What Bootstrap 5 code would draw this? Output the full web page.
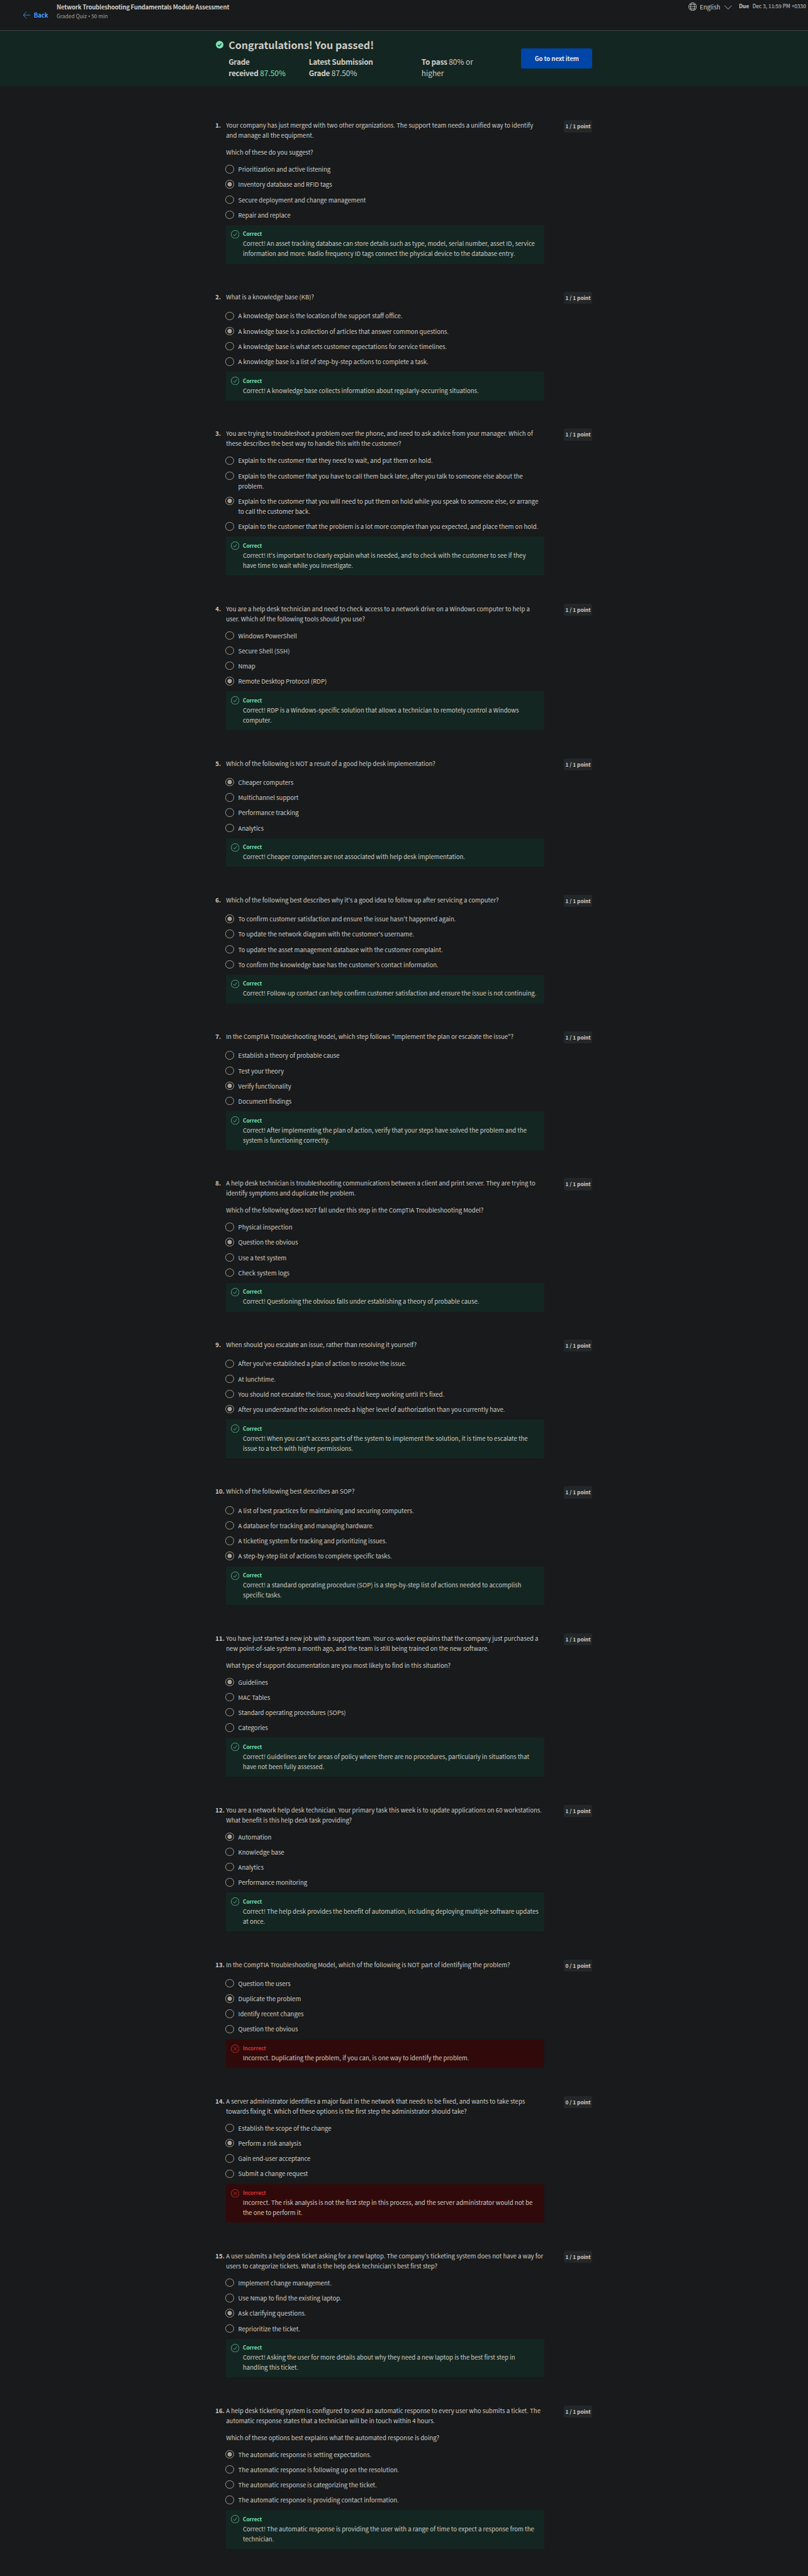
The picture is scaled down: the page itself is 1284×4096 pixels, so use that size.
<!DOCTYPE html>
<html lang="en">
<head>
<meta charset="utf-8">
<title>Network Troubleshooting Fundamentals Module Assessment</title>
<link href="https://cdn.jsdelivr.net/npm/bootstrap@5.3.0/dist/css/bootstrap.min.css" rel="stylesheet">
<style>
  html { font-size: 10.698px; }
  body {
    background: #181a1b; color: #d1cdc7; min-height: 4096px; overflow-x: hidden;
    font-family: "Noto Sans CJK SC", "Noto Sans", sans-serif;
    font-size: .896rem; line-height: 1.5rem; white-space: nowrap;
  }
  .quiz-top { height: 4.56rem; border-bottom: 1px solid #3e4446; padding: .26rem .29rem 0 3.32rem; }
  .back-link { color: #45a2ff; margin-top: 1.25rem; width: 5.1rem; }
  .back-link svg { width: 1.125rem; height: 1.125rem; margin-right: .57rem; }
  .quiz-name { letter-spacing: -.0202rem; }
  .quiz-kind { font-size: .785rem; line-height: 1.25rem; color: #a8a095; }
  .quiz-kind span { font-family: "Noto Sans", sans-serif; }
  .globe { width: 1.25rem; height: 1.25rem; }
  .lang-name { margin: 0 .62rem 0 .47rem; }
  .chev { width: 1.14rem; height: .69rem; margin: .1rem 1.01rem 0 0; }
  .due { font-size: .783rem; line-height: 1.25rem; }
  .due-date { margin-left: .5rem; }

  .result-band { background: #142621; height: 8.25rem; }
  .page-col { width: 56rem; margin-left: 32rem; }
  .pass-mark { width: 1.125rem; height: 1.125rem; margin: 1.56rem .76rem 0 .06rem; flex: none; }
  .result-body { padding-top: 1.1rem; }
  .result-title { font-size: 1.506rem; line-height: 2rem; font-weight: 700; }
  .result-grades { font-size: 1.112rem; line-height: 1.75rem; margin-top: .625rem; }
  .result-grades b { font-weight: 700; letter-spacing: -.026rem; }
  .got { color: #7be3b4; }
  .g1 { width: 11.92rem; } .g2 { width: 16.74rem; }
  .next-btn {
    --bs-btn-bg: #0045a8; --bs-btn-color: #e8e6e3; --bs-btn-border-color: #0045a8;
    width: 10.56rem; height: 3rem; margin-top: 2.625rem; padding: 0; border-radius: .25rem;
    font-size: .896rem; font-weight: 700; line-height: 1.5rem; letter-spacing: -.008rem;
  }

  .quiz-list { padding-top: 5.08rem; }
  .question { margin-bottom: 4.166rem; }
  .q-head { min-height: 1.8125rem; margin-bottom: 1.025rem; }
  .q-num { width: 1.58rem; flex: none; }
  .q-body { margin-left: 1.58rem; }
  .points {
    background: #232729; width: 4.25rem; height: 1.8rem; line-height: 1.8rem; border-radius: .25rem;
    font-size: .772rem; text-align: center; font-weight: 700;
  }
  .answer { margin: 0 0 .7625rem -.08rem; gap: .64rem; }
  .answer .form-check-input {
    width: 1.25rem; height: 1.25rem; margin: .1rem 0 0; flex: none;
    background: transparent; border: .125rem solid #a8a095;
  }
  .answer .form-check-input:checked { background: radial-gradient(circle, #a8a095 0 .3rem, transparent .36rem); }
  .feedback { width: 47.25rem; padding: .75rem 0 .76rem .75rem; background: #142621; }
  .feedback svg { width: 1.25rem; height: 1.25rem; flex: none; color: #7be3b4; }
  .verdict { font-size: .777rem; line-height: 1.25rem; margin: -.06rem 0 .06rem; font-weight: 700; color: #7be3b4; }
  .feedback.wrong { background: #300a0a; }
  .feedback.wrong svg, .wrong .verdict { color: #ff3838; }
  .wrong .verdict { font-weight: 500; letter-spacing: .01rem; }
</style>
</head>
<body>
<svg class="d-none">
  <symbol id="ok" viewBox="0 0 20 20"><g fill="none" stroke="currentColor" stroke-width="1"><circle cx="10" cy="10" r="9.4"/><path d="M6 10.4l2.700 3.100L14 6.500"/></g></symbol>
  <symbol id="bad" viewBox="0 0 20 20"><g fill="none" stroke="currentColor" stroke-width="1"><circle cx="10" cy="10" r="9.4"/><path d="M5.600 5.600l8.800 8.800M14.400 5.600l-8.800 8.800"/></g></symbol>
</svg>

<header class="quiz-top d-flex align-items-start">
  <a class="back-link d-flex align-items-center text-decoration-none fw-bold" href="#">
    <svg viewBox="0 0 18 18" fill="none" stroke="currentColor"><path d="M9 1L1.500 9 9 17" stroke-width="1.2"/><path d="M2 9h16" stroke-width="1.6" opacity=".75"/></svg>
    <span>Back</span>
  </a>
  <div class="flex-grow-1">
    <div class="fw-bold quiz-name">Network Troubleshooting Fundamentals Module Assessment</div>
    <div class="quiz-kind">Graded Quiz <span>•</span> 50 min</div>
  </div>
  <div class="d-flex align-items-center">
    <svg class="globe" viewBox="0 0 20 20" fill="none" stroke="currentColor" stroke-width="1.2"><circle cx="10" cy="10" r="9.300"/><ellipse cx="10" cy="10" rx="4.800" ry="9.300"/><path d="M.7 10h18.600M2.500 5h15M2.500 15h15"/></svg>
    <span class="lang-name">English</span>
    <svg class="chev" viewBox="0 0 18 11" fill="none" stroke="currentColor" stroke-width="1.300"><path d="M.5 1L9 10l8.500-9"/></svg>
  </div>
  <div class="due"><b>Due</b><span class="due-date">Dec 3, 11:59 PM +0330</span></div>
</header>

<section class="result-band">
  <div class="page-col d-flex">
    <svg class="pass-mark" viewBox="0 0 18 18"><circle cx="9" cy="9" r="9" fill="#7be3b4"/><path d="M4.600 9.300l3.100 3.200 5.400-6.500" fill="none" stroke="#142621" stroke-width="1.800"/></svg>
    <div class="result-body">
      <div class="result-title">Congratulations! You passed!</div>
      <div class="result-grades d-flex">
        <div class="g1"><b>Grade<br>received</b> <span class="got">87.50%</span></div>
        <div class="g2"><b>Latest Submission<br>Grade</b> 87.50%</div>
        <div><b>To pass</b> 80% or<br>higher</div>
      </div>
    </div>
    <button class="btn next-btn ms-auto" type="button">Go to next item</button>
  </div>
</section>

<main class="page-col quiz-list" id="quiz"></main>

<script>
  // Each entry: question paragraphs, answers, index of the chosen answer, feedback, earned point
  const quiz = [
    [["Your company has just merged with two other organizations. The support team needs a unified way to identify<br>and manage all the equipment.", "Which of these do you suggest?"],
     ["Prioritization and active listening", "Inventory database and RFID tags", "Secure deployment and change management", "Repair and replace"], 1,
     "Correct! An asset tracking database can store details such as type, model, serial number, asset ID, service<br>information and more. Radio frequency ID tags connect the physical device to the database entry.", 1],
    [["What is a knowledge base (KB)?"],
     ["A knowledge base is the location of the support staff office.", "A knowledge base is a collection of articles that answer common questions.", "A knowledge base is what sets customer expectations for service timelines.", "A knowledge base is a list of step-by-step actions to complete a task."], 1,
     "Correct! A knowledge base collects information about regularly-occurring situations.", 1],
    [["You are trying to troubleshoot a problem over the phone, and need to ask advice from your manager. Which of<br>these describes the best way to handle this with the customer?"],
     ["Explain to the customer that they need to wait, and put them on hold.", "Explain to the customer that you have to call them back later, after you talk to someone else about the<br>problem.", "Explain to the customer that you will need to put them on hold while you speak to someone else, or arrange<br>to call the customer back.", "Explain to the customer that the problem is a lot more complex than you expected, and place them on hold."], 2,
     "Correct! It's important to clearly explain what is needed, and to check with the customer to see if they<br>have time to wait while you investigate.", 1],
    [["You are a help desk technician and need to check access to a network drive on a Windows computer to help a<br>user. Which of the following tools should you use?"],
     ["Windows PowerShell", "Secure Shell (SSH)", "Nmap", "Remote Desktop Protocol (RDP)"], 3,
     "Correct! RDP is a Windows-specific solution that allows a technician to remotely control a Windows<br>computer.", 1],
    [["Which of the following is NOT a result of a good help desk implementation?"],
     ["Cheaper computers", "Multichannel support", "Performance tracking", "Analytics"], 0,
     "Correct! Cheaper computers are not associated with help desk implementation.", 1],
    [["Which of the following best describes why it's a good idea to follow up after servicing a computer?"],
     ["To confirm customer satisfaction and ensure the issue hasn't happened again.", "To update the network diagram with the customer's username.", "To update the asset management database with the customer complaint.", "To confirm the knowledge base has the customer's contact information."], 0,
     "Correct! Follow-up contact can help confirm customer satisfaction and ensure the issue is not continuing.", 1],
    [["In the CompTIA Troubleshooting Model, which step follows \"Implement the plan or escalate the issue\"?"],
     ["Establish a theory of probable cause", "Test your theory", "Verify functionality", "Document findings"], 2,
     "Correct! After implementing the plan of action, verify that your steps have solved the problem and the<br>system is functioning correctly.", 1],
    [["A help desk technician is troubleshooting communications between a client and print server. They are trying to<br>identify symptoms and duplicate the problem.", "Which of the following does NOT fall under this step in the CompTIA Troubleshooting Model?"],
     ["Physical inspection", "Question the obvious", "Use a test system", "Check system logs"], 1,
     "Correct! Questioning the obvious falls under establishing a theory of probable cause.", 1],
    [["When should you escalate an issue, rather than resolving it yourself?"],
     ["After you've established a plan of action to resolve the issue.", "At lunchtime.", "You should not escalate the issue, you should keep working until it's fixed.", "After you understand the solution needs a higher level of authorization than you currently have."], 3,
     "Correct! When you can't access parts of the system to implement the solution, it is time to escalate the<br>issue to a tech with higher permissions.", 1],
    [["Which of the following best describes an SOP?"],
     ["A list of best practices for maintaining and securing computers.", "A database for tracking and managing hardware.", "A ticketing system for tracking and prioritizing issues.", "A step-by-step list of actions to complete specific tasks."], 3,
     "Correct! a standard operating procedure (SOP) is a step-by-step list of actions needed to accomplish<br>specific tasks.", 1],
    [["You have just started a new job with a support team. Your co-worker explains that the company just purchased a<br>new point-of-sale system a month ago, and the team is still being trained on the new software.", "What type of support documentation are you most likely to find in this situation?"],
     ["Guidelines", "MAC Tables", "Standard operating procedures (SOPs)", "Categories"], 0,
     "Correct! Guidelines are for areas of policy where there are no procedures, particularly in situations that<br>have not been fully assessed.", 1],
    [["You are a network help desk technician. Your primary task this week is to update applications on 60 workstations.<br>What benefit is this help desk task providing?"],
     ["Automation", "Knowledge base", "Analytics", "Performance monitoring"], 0,
     "Correct! The help desk provides the benefit of automation, including deploying multiple software updates<br>at once.", 1],
    [["In the CompTIA Troubleshooting Model, which of the following is NOT part of identifying the problem?"],
     ["Question the users", "Duplicate the problem", "Identify recent changes", "Question the obvious"], 1,
     "Incorrect. Duplicating the problem, if you can, is one way to identify the problem.", 0],
    [["A server administrator identifies a major fault in the network that needs to be fixed, and wants to take steps<br>towards fixing it. Which of these options is the first step the administrator should take?"],
     ["Establish the scope of the change", "Perform a risk analysis", "Gain end-user acceptance", "Submit a change request"], 1,
     "Incorrect. The risk analysis is not the first step in this process, and the server administrator would not be<br>the one to perform it.", 0],
    [["A user submits a help desk ticket asking for a new laptop. The company's ticketing system does not have a way for<br>users to categorize tickets. What is the help desk technician's best first step?"],
     ["Implement change management.", "Use Nmap to find the existing laptop.", "Ask clarifying questions.", "Reprioritize the ticket."], 2,
     "Correct! Asking the user for more details about why they need a new laptop is the best first step in<br>handling this ticket.", 1],
    [["A help desk ticketing system is configured to send an automatic response to every user who submits a ticket. The<br>automatic response states that a technician will be in touch within 4 hours.", "Which of these options best explains what the automated response is doing?"],
     ["The automatic response is setting expectations.", "The automatic response is following up on the resolution.", "The automatic response is categorizing the ticket.", "The automatic response is providing contact information."], 0,
     "Correct! The automatic response is providing the user with a range of time to expect a response from the<br>technician.", 1]
  ];
  document.getElementById("quiz").innerHTML = quiz.map(([text, answers, chosen, note, point], n) => `
    <article class="question">
      <div class="q-head d-flex align-items-start">
        <b class="q-num">${n + 1}.</b>
        <div class="flex-grow-1">${text.map((p, i) => `<p class="${i < text.length - 1 ? "mb-3" : "mb-0"}">${p}</p>`).join("")}</div>
        <span class="points">${point} / 1 point</span>
      </div>
      <div class="q-body">
        ${answers.map((a, i) => `<label class="answer d-flex align-items-start"><input class="form-check-input" type="radio" name="q${n}" ${i === chosen ? "checked" : ""}><span>${a}</span></label>`).join("")}
        <div class="feedback d-flex align-items-start ${point ? "" : "wrong"}">
          <svg class="me-2"><use href="#${point ? "ok" : "bad"}"/></svg>
          <div><div class="verdict">${point ? "Correct" : "Incorrect"}</div>${note}</div>
        </div>
      </div>
    </article>`).join("");
</script>
<script src="https://cdn.jsdelivr.net/npm/bootstrap@5.3.0/dist/js/bootstrap.bundle.min.js"></script>
</body>
</html>
